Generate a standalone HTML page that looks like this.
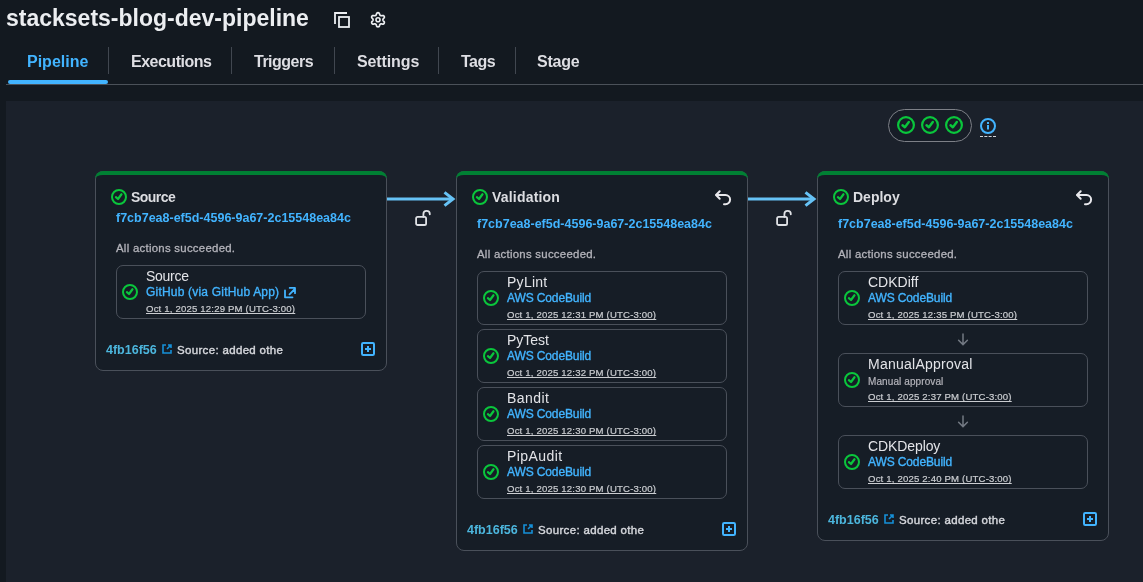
<!DOCTYPE html><html><head><meta charset="utf-8"><style>
html,body{margin:0;padding:0;}
body{width:1143px;height:582px;overflow:hidden;background:#131920;position:relative;font-family:"Liberation Sans",sans-serif;}
.t{position:absolute;white-space:pre;will-change:transform;}
.a{position:absolute;overflow:visible;}
.card{position:absolute;background:#161d26;border:1px solid #4a505a;border-radius:8px;box-sizing:border-box;}
.card::before{content:"";position:absolute;left:-1px;right:-1px;top:-1px;height:12px;border-top:4px solid #008033;border-radius:8px 8px 0 0;box-sizing:border-box;}
.box{position:absolute;border:1px solid #4a505a;border-radius:7px;box-sizing:border-box;}
.u{text-decoration:underline;text-underline-offset:1px;}
</style></head><body>
<div class="t" style="left:5.5px;top:6.53px;font-size:23px;line-height:23px;color:#eceef1;font-weight:700;letter-spacing:0px;">stacksets-blog-dev-pipeline</div>
<svg class="a" style="left:330px;top:8px" width="24" height="24" viewBox="330 8 24 24"><path d="M335 24 V13 H347" fill="none" stroke="#eceef1" stroke-width="1.8"/><rect x="339" y="17" width="10" height="10" fill="none" stroke="#eceef1" stroke-width="1.8"/></svg>
<svg class="a" style="left:368px;top:10px" width="20" height="20" viewBox="368 10 20 20"><path d="M382.90 19.80 L382.97 20.23 L383.19 20.72 L383.80 21.35 L384.32 22.10 L384.35 22.76 L384.15 23.35 L383.74 23.82 L383.15 24.12 L382.24 24.04 L381.39 23.84 L380.86 23.89 L380.45 24.04 L380.11 24.32 L379.80 24.76 L379.55 25.60 L379.17 26.42 L378.61 26.78 L378.00 26.90 L377.39 26.78 L376.83 26.42 L376.45 25.60 L376.20 24.76 L375.89 24.32 L375.55 24.04 L375.14 23.89 L374.61 23.84 L373.76 24.04 L372.85 24.12 L372.26 23.82 L371.85 23.35 L371.65 22.76 L371.68 22.10 L372.20 21.35 L372.81 20.72 L373.03 20.23 L373.10 19.80 L373.03 19.37 L372.81 18.88 L372.20 18.25 L371.68 17.50 L371.65 16.84 L371.85 16.25 L372.26 15.78 L372.85 15.48 L373.76 15.56 L374.61 15.76 L375.14 15.71 L375.55 15.56 L375.89 15.28 L376.20 14.84 L376.45 14.00 L376.83 13.18 L377.39 12.82 L378.00 12.70 L378.61 12.82 L379.17 13.18 L379.55 14.00 L379.80 14.84 L380.11 15.28 L380.45 15.56 L380.86 15.71 L381.39 15.76 L382.24 15.56 L383.15 15.48 L383.74 15.78 L384.15 16.25 L384.35 16.84 L384.32 17.50 L383.80 18.25 L383.19 18.88 L382.97 19.37 Z" fill="none" stroke="#eceef1" stroke-width="1.7" stroke-linejoin="round"/><circle cx="378" cy="19.8" r="2" fill="none" stroke="#eceef1" stroke-width="1.6"/></svg>
<div class="t" style="left:27px;top:54.46px;font-size:16px;line-height:16px;color:#42b4ff;font-weight:700;letter-spacing:0px;">Pipeline</div>
<div class="t" style="left:130.7px;top:54.46px;font-size:16px;line-height:16px;color:#dedee3;font-weight:700;letter-spacing:-0.5px;">Executions</div>
<div class="t" style="left:254px;top:54.46px;font-size:16px;line-height:16px;color:#dedee3;font-weight:700;letter-spacing:-0.5px;">Triggers</div>
<div class="t" style="left:356.5px;top:54.46px;font-size:16px;line-height:16px;color:#dedee3;font-weight:700;letter-spacing:-0.12px;">Settings</div>
<div class="t" style="left:460.6px;top:54.46px;font-size:16px;line-height:16px;color:#dedee3;font-weight:700;letter-spacing:-0.5px;">Tags</div>
<div class="t" style="left:536.7px;top:54.46px;font-size:16px;line-height:16px;color:#dedee3;font-weight:700;letter-spacing:-0.2px;">Stage</div>
<div style="position:absolute;left:108px;top:47px;width:1px;height:27px;background:#414750"></div>
<div style="position:absolute;left:231px;top:47px;width:1px;height:27px;background:#414750"></div>
<div style="position:absolute;left:334px;top:47px;width:1px;height:27px;background:#414750"></div>
<div style="position:absolute;left:438px;top:47px;width:1px;height:27px;background:#414750"></div>
<div style="position:absolute;left:515px;top:47px;width:1px;height:27px;background:#414750"></div>
<div style="position:absolute;left:6px;top:84px;width:1137px;height:1px;background:#4b5159"></div>
<div style="position:absolute;left:8px;top:80px;width:100px;height:4px;background:#42b4ff;border-radius:2px"></div>
<div style="position:absolute;left:6px;top:101px;width:1137px;height:481px;background:#1b212b"></div>
<div style="position:absolute;left:888px;top:109px;width:84px;height:33px;border:1px solid #7d8087;border-radius:17px;box-sizing:border-box;background:#171d27"></div>
<svg class="a" style="left:897.0px;top:116.0px" width="18" height="18" viewBox="0 0 18 18"><circle cx="9.0" cy="9.0" r="7.9" fill="none" stroke="#0ac63c" stroke-width="2.2"/><path d="M5.51 9.22 L7.88 11.25 L11.81 5.94" fill="none" stroke="#0ac63c" stroke-width="2.4200000000000004" stroke-linecap="round" stroke-linejoin="round"/></svg>
<svg class="a" style="left:921.0px;top:116.0px" width="18" height="18" viewBox="0 0 18 18"><circle cx="9.0" cy="9.0" r="7.9" fill="none" stroke="#0ac63c" stroke-width="2.2"/><path d="M5.51 9.22 L7.88 11.25 L11.81 5.94" fill="none" stroke="#0ac63c" stroke-width="2.4200000000000004" stroke-linecap="round" stroke-linejoin="round"/></svg>
<svg class="a" style="left:945.0px;top:116.0px" width="18" height="18" viewBox="0 0 18 18"><circle cx="9.0" cy="9.0" r="7.9" fill="none" stroke="#0ac63c" stroke-width="2.2"/><path d="M5.51 9.22 L7.88 11.25 L11.81 5.94" fill="none" stroke="#0ac63c" stroke-width="2.4200000000000004" stroke-linecap="round" stroke-linejoin="round"/></svg>
<svg class="a" style="left:980px;top:118px" width="16" height="16" viewBox="0 0 16 16"><circle cx="8" cy="8" r="7" fill="none" stroke="#42b4ff" stroke-width="2"/><path d="M8 7.1 V11.6" stroke="#42b4ff" stroke-width="2"/><rect x="7" y="4" width="2" height="2" fill="#42b4ff"/></svg>
<div style="position:absolute;left:980px;top:136px;width:16px;height:1px;border-top:1px dashed #d0d3d8"></div>
<svg class="a" style="left:387px;top:189px" width="69" height="20" viewBox="387 189 69 20"><path d="M387 199 H453" stroke="#66c2f5" stroke-width="3"/><path d="M444.5 192.4 L453 199 L444.5 205.6" fill="none" stroke="#66c2f5" stroke-width="3"/></svg>
<svg class="a" style="left:748px;top:189px" width="69" height="20" viewBox="748 189 69 20"><path d="M748 199 H814" stroke="#66c2f5" stroke-width="3"/><path d="M805.5 192.4 L814 199 L805.5 205.6" fill="none" stroke="#66c2f5" stroke-width="3"/></svg>
<svg class="a" style="left:415px;top:209px" width="18" height="18" viewBox="0 0 18 18"><rect x="1.1" y="7.9" width="10" height="8.1" rx="1.6" fill="none" stroke="#e0e2e6" stroke-width="1.8"/><path d="M8.4 7.9 V5.1 A3.2 3.2 0 0 1 14.8 5.1 V5.3" fill="none" stroke="#e0e2e6" stroke-width="1.8" stroke-linecap="round"/></svg>
<svg class="a" style="left:776px;top:209px" width="18" height="18" viewBox="0 0 18 18"><rect x="1.1" y="7.9" width="10" height="8.1" rx="1.6" fill="none" stroke="#e0e2e6" stroke-width="1.8"/><path d="M8.4 7.9 V5.1 A3.2 3.2 0 0 1 14.8 5.1 V5.3" fill="none" stroke="#e0e2e6" stroke-width="1.8" stroke-linecap="round"/></svg>
<div class="card" style="left:95px;top:171px;width:292px;height:200px"></div>
<svg class="a" style="left:111.0px;top:189.0px" width="16" height="16" viewBox="0 0 16 16"><circle cx="8.0" cy="8.0" r="7.0" fill="none" stroke="#0ac63c" stroke-width="2"/><path d="M4.90 8.19 L7.00 10.00 L10.50 5.28" fill="none" stroke="#0ac63c" stroke-width="2.2" stroke-linecap="round" stroke-linejoin="round"/></svg>
<div class="t" style="left:131px;top:190.15px;font-size:14px;line-height:14px;color:#dcdde1;font-weight:700;letter-spacing:-0.55px;">Source</div>
<div class="t" style="left:116px;top:212.42px;font-size:12.5px;line-height:12.5px;color:#42b4ff;font-weight:700;letter-spacing:0px;">f7cb7ea8-ef5d-4596-9a67-2c15548ea84c</div>
<div class="t" style="left:116px;top:243.15px;font-size:11.4px;line-height:11.4px;color:#b4b4bb;font-weight:400;letter-spacing:0.27px;-webkit-text-stroke:0.3px #b4b4bb;">All actions succeeded.</div>
<div class="box" style="left:116px;top:265px;width:250px;height:54px"></div>
<svg class="a" style="left:122.0px;top:284.0px" width="16" height="16" viewBox="0 0 16 16"><circle cx="8.0" cy="8.0" r="7.0" fill="none" stroke="#0ac63c" stroke-width="2"/><path d="M4.90 8.19 L7.00 10.00 L10.50 5.28" fill="none" stroke="#0ac63c" stroke-width="2.2" stroke-linecap="round" stroke-linejoin="round"/></svg>
<div class="t" style="left:146px;top:269.15px;font-size:14px;line-height:14px;color:#e3e4e8;font-weight:400;letter-spacing:-0.28px;">Source</div>
<div class="t" style="left:146px;top:286.34px;font-size:12px;line-height:12px;color:#42b4ff;font-weight:400;letter-spacing:0.2px;-webkit-text-stroke:0.35px #42b4ff;">GitHub (via GitHub App)</div>
<div class="t" style="left:146px;top:304.37px;font-size:9.6px;line-height:9.6px;color:#cbcdd1;font-weight:400;letter-spacing:0.17px;text-decoration:underline;text-underline-offset:1px;text-decoration-skip-ink:none;-webkit-text-stroke:0.2px #cbcdd1;">Oct 1, 2025 12:29 PM (UTC-3:00)</div>
<svg class="a" style="left:284px;top:285.7px" width="12" height="12" viewBox="0 0 12 12"><path d="M1 4.5 V11.3 H8.5" fill="none" stroke="#42b4ff" stroke-width="1.8" stroke-linecap="round" stroke-linejoin="round"/><path d="M5.5 8.3 L10.8 3 M5.7 1.9 H11 V7.2" fill="none" stroke="#42b4ff" stroke-width="1.8" stroke-linecap="round" stroke-linejoin="round"/></svg>
<div class="t" style="left:106px;top:344.42px;font-size:12.5px;line-height:12.5px;color:#4cb6dd;font-weight:700;letter-spacing:0px;">4fb16f56</div>
<svg class="a" style="left:162px;top:344px" width="10" height="10" viewBox="0 0 10 10"><path d="M4 1 H1 V9 H9 V6" fill="none" stroke="#1690d8" stroke-width="1.6"/><path d="M5 5 L9 1 M6 1 H9 V4" fill="none" stroke="#1690d8" stroke-width="1.6"/></svg>
<div class="t" style="left:176.8px;top:344.97px;font-size:11.5px;line-height:11.5px;color:#d5d7dc;font-weight:400;letter-spacing:0.33px;-webkit-text-stroke:0.4px #d5d7dc;">Source: added othe</div>
<svg class="a" style="left:361px;top:342px" width="14" height="14" viewBox="0 0 14 14"><rect x="1" y="1" width="12" height="12" rx="1.2" fill="none" stroke="#42b4ff" stroke-width="2"/><path d="M7 4 V10 M4 7 H10" stroke="#42b4ff" stroke-width="2"/></svg>
<div class="card" style="left:456px;top:171px;width:292px;height:380px"></div>
<svg class="a" style="left:472.0px;top:189.0px" width="16" height="16" viewBox="0 0 16 16"><circle cx="8.0" cy="8.0" r="7.0" fill="none" stroke="#0ac63c" stroke-width="2"/><path d="M4.90 8.19 L7.00 10.00 L10.50 5.28" fill="none" stroke="#0ac63c" stroke-width="2.2" stroke-linecap="round" stroke-linejoin="round"/></svg>
<div class="t" style="left:492px;top:190.15px;font-size:14px;line-height:14px;color:#dcdde1;font-weight:700;letter-spacing:0.2px;">Validation</div>
<svg class="a" style="left:714px;top:189px" width="20" height="18" viewBox="0 0 20 18"><path d="M5.7 2.3 L2 6 L5.7 9.7" fill="none" stroke="#e8e8ec" stroke-width="2" stroke-linecap="round" stroke-linejoin="round"/><path d="M2.5 6 H11.5 A4.6 4.6 0 0 1 11.5 15.2 H10" fill="none" stroke="#e8e8ec" stroke-width="2" stroke-linecap="round"/></svg>
<div class="t" style="left:477px;top:218.42px;font-size:12.5px;line-height:12.5px;color:#42b4ff;font-weight:700;letter-spacing:0px;">f7cb7ea8-ef5d-4596-9a67-2c15548ea84c</div>
<div class="t" style="left:477px;top:249.15px;font-size:11.4px;line-height:11.4px;color:#b4b4bb;font-weight:400;letter-spacing:0.27px;-webkit-text-stroke:0.3px #b4b4bb;">All actions succeeded.</div>
<div class="box" style="left:477px;top:271px;width:250px;height:54px"></div>
<svg class="a" style="left:483.0px;top:290.0px" width="16" height="16" viewBox="0 0 16 16"><circle cx="8.0" cy="8.0" r="7.0" fill="none" stroke="#0ac63c" stroke-width="2"/><path d="M4.90 8.19 L7.00 10.00 L10.50 5.28" fill="none" stroke="#0ac63c" stroke-width="2.2" stroke-linecap="round" stroke-linejoin="round"/></svg>
<div class="t" style="left:507px;top:275.15px;font-size:14px;line-height:14px;color:#e3e4e8;font-weight:400;letter-spacing:0.27px;">PyLint</div>
<div class="t" style="left:507px;top:292.34px;font-size:12px;line-height:12px;color:#42b4ff;font-weight:400;letter-spacing:-0.12px;-webkit-text-stroke:0.35px #42b4ff;">AWS CodeBuild</div>
<div class="t" style="left:507px;top:310.37px;font-size:9.6px;line-height:9.6px;color:#cbcdd1;font-weight:400;letter-spacing:0.17px;text-decoration:underline;text-underline-offset:1px;text-decoration-skip-ink:none;-webkit-text-stroke:0.2px #cbcdd1;">Oct 1, 2025 12:31 PM (UTC-3:00)</div>
<div class="box" style="left:477px;top:329px;width:250px;height:54px"></div>
<svg class="a" style="left:483.0px;top:348.0px" width="16" height="16" viewBox="0 0 16 16"><circle cx="8.0" cy="8.0" r="7.0" fill="none" stroke="#0ac63c" stroke-width="2"/><path d="M4.90 8.19 L7.00 10.00 L10.50 5.28" fill="none" stroke="#0ac63c" stroke-width="2.2" stroke-linecap="round" stroke-linejoin="round"/></svg>
<div class="t" style="left:507px;top:333.15px;font-size:14px;line-height:14px;color:#e3e4e8;font-weight:400;letter-spacing:0px;">PyTest</div>
<div class="t" style="left:507px;top:350.34px;font-size:12px;line-height:12px;color:#42b4ff;font-weight:400;letter-spacing:-0.12px;-webkit-text-stroke:0.35px #42b4ff;">AWS CodeBuild</div>
<div class="t" style="left:507px;top:368.37px;font-size:9.6px;line-height:9.6px;color:#cbcdd1;font-weight:400;letter-spacing:0.17px;text-decoration:underline;text-underline-offset:1px;text-decoration-skip-ink:none;-webkit-text-stroke:0.2px #cbcdd1;">Oct 1, 2025 12:32 PM (UTC-3:00)</div>
<div class="box" style="left:477px;top:387px;width:250px;height:54px"></div>
<svg class="a" style="left:483.0px;top:406.0px" width="16" height="16" viewBox="0 0 16 16"><circle cx="8.0" cy="8.0" r="7.0" fill="none" stroke="#0ac63c" stroke-width="2"/><path d="M4.90 8.19 L7.00 10.00 L10.50 5.28" fill="none" stroke="#0ac63c" stroke-width="2.2" stroke-linecap="round" stroke-linejoin="round"/></svg>
<div class="t" style="left:507px;top:391.15px;font-size:14px;line-height:14px;color:#e3e4e8;font-weight:400;letter-spacing:0.42px;">Bandit</div>
<div class="t" style="left:507px;top:408.34px;font-size:12px;line-height:12px;color:#42b4ff;font-weight:400;letter-spacing:-0.12px;-webkit-text-stroke:0.35px #42b4ff;">AWS CodeBuild</div>
<div class="t" style="left:507px;top:426.37px;font-size:9.6px;line-height:9.6px;color:#cbcdd1;font-weight:400;letter-spacing:0.17px;text-decoration:underline;text-underline-offset:1px;text-decoration-skip-ink:none;-webkit-text-stroke:0.2px #cbcdd1;">Oct 1, 2025 12:30 PM (UTC-3:00)</div>
<div class="box" style="left:477px;top:445px;width:250px;height:54px"></div>
<svg class="a" style="left:483.0px;top:464.0px" width="16" height="16" viewBox="0 0 16 16"><circle cx="8.0" cy="8.0" r="7.0" fill="none" stroke="#0ac63c" stroke-width="2"/><path d="M4.90 8.19 L7.00 10.00 L10.50 5.28" fill="none" stroke="#0ac63c" stroke-width="2.2" stroke-linecap="round" stroke-linejoin="round"/></svg>
<div class="t" style="left:507px;top:449.15px;font-size:14px;line-height:14px;color:#e3e4e8;font-weight:400;letter-spacing:0.42px;">PipAudit</div>
<div class="t" style="left:507px;top:466.34px;font-size:12px;line-height:12px;color:#42b4ff;font-weight:400;letter-spacing:-0.12px;-webkit-text-stroke:0.35px #42b4ff;">AWS CodeBuild</div>
<div class="t" style="left:507px;top:484.37px;font-size:9.6px;line-height:9.6px;color:#cbcdd1;font-weight:400;letter-spacing:0.17px;text-decoration:underline;text-underline-offset:1px;text-decoration-skip-ink:none;-webkit-text-stroke:0.2px #cbcdd1;">Oct 1, 2025 12:30 PM (UTC-3:00)</div>
<div class="t" style="left:467px;top:524.42px;font-size:12.5px;line-height:12.5px;color:#4cb6dd;font-weight:700;letter-spacing:0px;">4fb16f56</div>
<svg class="a" style="left:523px;top:524px" width="10" height="10" viewBox="0 0 10 10"><path d="M4 1 H1 V9 H9 V6" fill="none" stroke="#1690d8" stroke-width="1.6"/><path d="M5 5 L9 1 M6 1 H9 V4" fill="none" stroke="#1690d8" stroke-width="1.6"/></svg>
<div class="t" style="left:537.8px;top:524.97px;font-size:11.5px;line-height:11.5px;color:#d5d7dc;font-weight:400;letter-spacing:0.33px;-webkit-text-stroke:0.4px #d5d7dc;">Source: added othe</div>
<svg class="a" style="left:722px;top:522px" width="14" height="14" viewBox="0 0 14 14"><rect x="1" y="1" width="12" height="12" rx="1.2" fill="none" stroke="#42b4ff" stroke-width="2"/><path d="M7 4 V10 M4 7 H10" stroke="#42b4ff" stroke-width="2"/></svg>
<div class="card" style="left:817px;top:171px;width:292px;height:370px"></div>
<svg class="a" style="left:833.0px;top:189.0px" width="16" height="16" viewBox="0 0 16 16"><circle cx="8.0" cy="8.0" r="7.0" fill="none" stroke="#0ac63c" stroke-width="2"/><path d="M4.90 8.19 L7.00 10.00 L10.50 5.28" fill="none" stroke="#0ac63c" stroke-width="2.2" stroke-linecap="round" stroke-linejoin="round"/></svg>
<div class="t" style="left:853px;top:190.15px;font-size:14px;line-height:14px;color:#dcdde1;font-weight:700;letter-spacing:0px;">Deploy</div>
<svg class="a" style="left:1075px;top:189px" width="20" height="18" viewBox="0 0 20 18"><path d="M5.7 2.3 L2 6 L5.7 9.7" fill="none" stroke="#e8e8ec" stroke-width="2" stroke-linecap="round" stroke-linejoin="round"/><path d="M2.5 6 H11.5 A4.6 4.6 0 0 1 11.5 15.2 H10" fill="none" stroke="#e8e8ec" stroke-width="2" stroke-linecap="round"/></svg>
<div class="t" style="left:838px;top:218.42px;font-size:12.5px;line-height:12.5px;color:#42b4ff;font-weight:700;letter-spacing:0px;">f7cb7ea8-ef5d-4596-9a67-2c15548ea84c</div>
<div class="t" style="left:838px;top:249.15px;font-size:11.4px;line-height:11.4px;color:#b4b4bb;font-weight:400;letter-spacing:0.27px;-webkit-text-stroke:0.3px #b4b4bb;">All actions succeeded.</div>
<div class="box" style="left:838px;top:271px;width:250px;height:54px"></div>
<svg class="a" style="left:844.0px;top:290.0px" width="16" height="16" viewBox="0 0 16 16"><circle cx="8.0" cy="8.0" r="7.0" fill="none" stroke="#0ac63c" stroke-width="2"/><path d="M4.90 8.19 L7.00 10.00 L10.50 5.28" fill="none" stroke="#0ac63c" stroke-width="2.2" stroke-linecap="round" stroke-linejoin="round"/></svg>
<div class="t" style="left:868px;top:275.15px;font-size:14px;line-height:14px;color:#e3e4e8;font-weight:400;letter-spacing:0px;">CDKDiff</div>
<div class="t" style="left:868px;top:292.34px;font-size:12px;line-height:12px;color:#42b4ff;font-weight:400;letter-spacing:-0.12px;-webkit-text-stroke:0.35px #42b4ff;">AWS CodeBuild</div>
<div class="t" style="left:868px;top:310.37px;font-size:9.6px;line-height:9.6px;color:#cbcdd1;font-weight:400;letter-spacing:0.17px;text-decoration:underline;text-underline-offset:1px;text-decoration-skip-ink:none;-webkit-text-stroke:0.2px #cbcdd1;">Oct 1, 2025 12:35 PM (UTC-3:00)</div>
<svg class="a" style="left:957px;top:333px" width="12" height="14" viewBox="0 0 12 14"><path d="M6 0.9 V11.6 M1.6 7.2 L6 11.6 L10.4 7.2" fill="none" stroke="#737983" stroke-width="1.5" stroke-linecap="round"/></svg>
<div class="box" style="left:838px;top:353px;width:250px;height:54px"></div>
<svg class="a" style="left:844.0px;top:372.0px" width="16" height="16" viewBox="0 0 16 16"><circle cx="8.0" cy="8.0" r="7.0" fill="none" stroke="#0ac63c" stroke-width="2"/><path d="M4.90 8.19 L7.00 10.00 L10.50 5.28" fill="none" stroke="#0ac63c" stroke-width="2.2" stroke-linecap="round" stroke-linejoin="round"/></svg>
<div class="t" style="left:868px;top:357.15px;font-size:14px;line-height:14px;color:#e3e4e8;font-weight:400;letter-spacing:0.25px;">ManualApproval</div>
<div class="t" style="left:867.5px;top:376.93px;font-size:10px;line-height:10px;color:#b4b4bb;font-weight:400;letter-spacing:0.1px;-webkit-text-stroke:0.2px #b4b4bb;">Manual approval</div>
<div class="t" style="left:868px;top:392.37px;font-size:9.6px;line-height:9.6px;color:#cbcdd1;font-weight:400;letter-spacing:0.17px;text-decoration:underline;text-underline-offset:1px;text-decoration-skip-ink:none;-webkit-text-stroke:0.2px #cbcdd1;">Oct 1, 2025 2:37 PM (UTC-3:00)</div>
<svg class="a" style="left:957px;top:415px" width="12" height="14" viewBox="0 0 12 14"><path d="M6 0.9 V11.6 M1.6 7.2 L6 11.6 L10.4 7.2" fill="none" stroke="#737983" stroke-width="1.5" stroke-linecap="round"/></svg>
<div class="box" style="left:838px;top:435px;width:250px;height:54px"></div>
<svg class="a" style="left:844.0px;top:454.0px" width="16" height="16" viewBox="0 0 16 16"><circle cx="8.0" cy="8.0" r="7.0" fill="none" stroke="#0ac63c" stroke-width="2"/><path d="M4.90 8.19 L7.00 10.00 L10.50 5.28" fill="none" stroke="#0ac63c" stroke-width="2.2" stroke-linecap="round" stroke-linejoin="round"/></svg>
<div class="t" style="left:868px;top:439.15px;font-size:14px;line-height:14px;color:#e3e4e8;font-weight:400;letter-spacing:-0.1px;">CDKDeploy</div>
<div class="t" style="left:868px;top:456.34px;font-size:12px;line-height:12px;color:#42b4ff;font-weight:400;letter-spacing:-0.12px;-webkit-text-stroke:0.35px #42b4ff;">AWS CodeBuild</div>
<div class="t" style="left:868px;top:474.37px;font-size:9.6px;line-height:9.6px;color:#cbcdd1;font-weight:400;letter-spacing:0.17px;text-decoration:underline;text-underline-offset:1px;text-decoration-skip-ink:none;-webkit-text-stroke:0.2px #cbcdd1;">Oct 1, 2025 2:40 PM (UTC-3:00)</div>
<div class="t" style="left:828px;top:514.42px;font-size:12.5px;line-height:12.5px;color:#4cb6dd;font-weight:700;letter-spacing:0px;">4fb16f56</div>
<svg class="a" style="left:884px;top:514px" width="10" height="10" viewBox="0 0 10 10"><path d="M4 1 H1 V9 H9 V6" fill="none" stroke="#1690d8" stroke-width="1.6"/><path d="M5 5 L9 1 M6 1 H9 V4" fill="none" stroke="#1690d8" stroke-width="1.6"/></svg>
<div class="t" style="left:898.8px;top:514.97px;font-size:11.5px;line-height:11.5px;color:#d5d7dc;font-weight:400;letter-spacing:0.33px;-webkit-text-stroke:0.4px #d5d7dc;">Source: added othe</div>
<svg class="a" style="left:1083px;top:512px" width="14" height="14" viewBox="0 0 14 14"><rect x="1" y="1" width="12" height="12" rx="1.2" fill="none" stroke="#42b4ff" stroke-width="2"/><path d="M7 4 V10 M4 7 H10" stroke="#42b4ff" stroke-width="2"/></svg>
</body></html>
